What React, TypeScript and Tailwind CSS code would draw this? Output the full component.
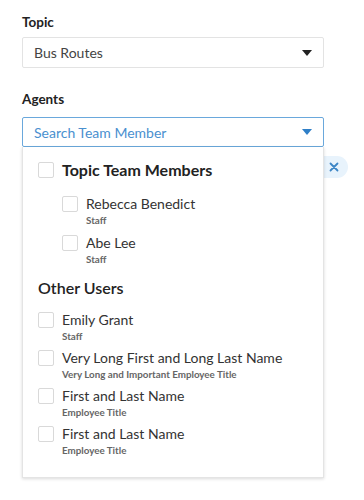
import React from "react";

type Person = { name: string; title: string };

const team: Person[] = [
  { name: "Rebecca Benedict", title: "Staff" },
  { name: "Abe Lee", title: "Staff" },
];

const others: Person[] = [
  { name: "Emily Grant", title: "Staff" },
  { name: "Very Long First and Long Last Name", title: "Very Long and Important Employee Title" },
  { name: "First and Last Name", title: "Employee Title" },
  { name: "First and Last Name", title: "Employee Title" },
];

function Caret({ className }: { className: string }) {
  return (
    <svg width="10" height="6" viewBox="0 0 10 6" className={className}>
      <path d="M0 0h10L5 6z" fill="currentColor" />
    </svg>
  );
}

function Box() {
  return <span className="block w-4 h-4 shrink-0 rounded-[2px] border border-[#d9d9d9] bg-white" />;
}

function PersonRow({ person }: { person: Person }) {
  return (
    <div className="flex items-start gap-2">
      <div className="pt-[1px]">
        <Box />
      </div>
      <div className="flex flex-col">
        <span className="text-[14px] leading-[18px] text-[#333]">{person.name}</span>
        <span className="text-[9.8px] leading-[14px] font-bold text-[#666]">{person.title}</span>
      </div>
    </div>
  );
}

export default function App() {
  return (
    <div className="w-[364px] h-[500px] bg-white pl-[22px] pt-[14px] font-['Lato',sans-serif] text-[#222]">
      <div className="text-[13.5px] font-bold leading-[16px]">Topic</div>
      <div className="mt-[7px] w-[302px] h-[31px] flex items-center justify-between px-[11px] border border-[#e3e3e3] rounded-[2px]">
        <span className="text-[14px] text-[#444]">Bus Routes</span>
        <Caret className="text-[#222]" />
      </div>

      <div className="mt-[23px] text-[13.5px] font-bold leading-[16px]">Agents</div>
      <div className="relative mt-[10px] w-[302px]">
        <div className="h-[30px] flex items-center justify-between px-[11px] border border-[#6aa8dc] rounded-[2px]">
          <span className="text-[14px] text-[#4a90cf]">Search Team Member</span>
          <Caret className="text-[#2f7fc7]" />
        </div>

        <div className="absolute left-[301px] top-[39px] w-[25px] h-[22px] rounded-r-full bg-[#e8f3fc] flex items-center justify-end pr-[9px]">
          <svg width="10" height="10" viewBox="0 0 10 10">
            <path d="M1.5 1.5l7 7M8.5 1.5l-7 7" stroke="#3d86c6" strokeWidth="1.8" strokeLinecap="round" />
          </svg>
        </div>

        <div className="relative z-10 bg-white border border-t-0 border-[#e4e4e4] shadow-[0_1px_3px_rgba(0,0,0,0.15)] pl-[15px] pt-[13px] pb-[20px]">
          <div className="flex items-center gap-2">
            <Box />
            <span className="text-[16px] font-bold text-[#222] leading-[20px]">Topic Team Members</span>
          </div>
          <div className="mt-[15px] pl-[24px] flex flex-col gap-[7px]">
            {team.map((p, i) => (
              <PersonRow key={i} person={p} />
            ))}
          </div>
          <div className="mt-[12px] text-[16px] font-semibold text-[#222] leading-[20px]">Other Users</div>
          <div className="mt-[13px] flex flex-col gap-[6px]">
            {others.map((p, i) => (
              <PersonRow key={i} person={p} />
            ))}
          </div>
        </div>
      </div>
    </div>
  );
}
